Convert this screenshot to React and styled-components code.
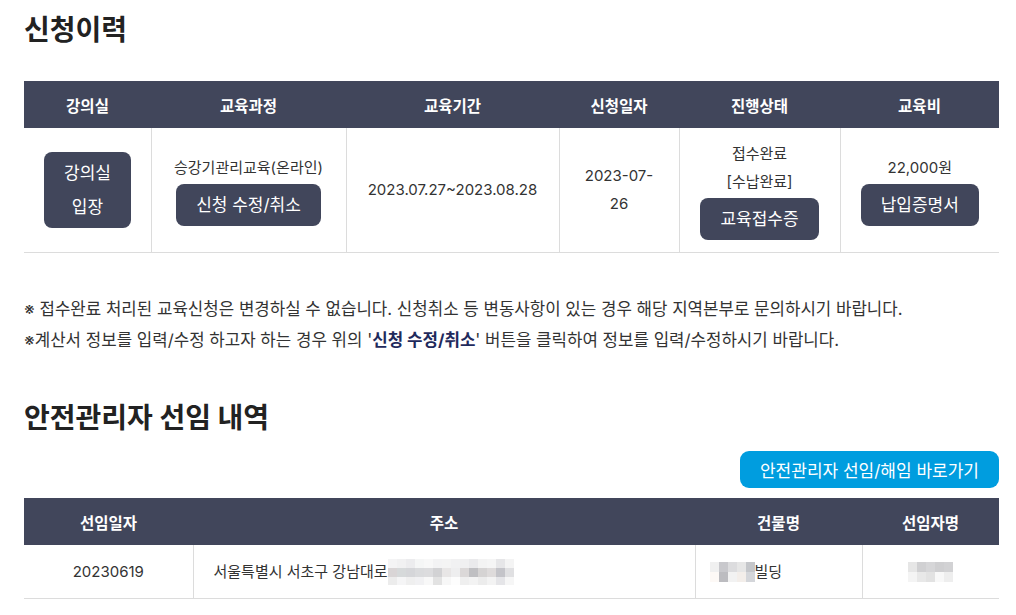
import styled, { createGlobalStyle } from 'styled-components';

const GlobalStyle = createGlobalStyle`
    body {
        margin: 0;
        background: #fff;
        font-family: "Inter", "Noto Sans CJK KR", sans-serif;
        color: #333;
    }
`;

const Page = styled.div`
    width: 975px;
    padding: 12px 24px 0;
`;

const Title = styled.h2`
    margin: 0;
    font-size: 28px;
    line-height: 36px;
    font-weight: 700;
    color: #222;
    letter-spacing: 0;
    margin-top: ${(p) => p.$top || 0}px;
`;

const Table = styled.table`
    width: 975px;
    table-layout: fixed;
    border-collapse: collapse;
    margin-top: ${(p) => p.$top || 0}px;
`;

const Th = styled.th`
    height: 47px;
    padding: 0;
    background: #41465b;
    color: #fff;
    font-size: 15.5px;
    font-weight: 700;
    text-align: center;
`;

const Td = styled.td`
    padding: ${(p) => (p.$short ? `0 20px 0 ${p.$left || 20}px` : '12px 20px')};
    height: ${(p) => (p.$short ? '53px' : 'auto')};
    border-bottom: 1px solid #dcdcdc;
    border-left: 1px solid #dcdcdc;
    font-size: 15px;
    line-height: 28px;
    color: #333;
    text-align: ${(p) => p.$align || 'center'};
    vertical-align: middle;
    word-break: keep-all;
    white-space: ${(p) => (p.$nowrap ? 'nowrap' : 'normal')};

    &:first-child {
        border-left: none;
    }
`;

const DarkButton = styled.button`
    display: inline-block;
    margin-top: ${(p) => p.$gap || 0}px;
    padding: 4px 20px;
    border: none;
    border-radius: 8px;
    background: #41465b;
    color: #fff;
    font-family: inherit;
    font-size: 17px;
    line-height: 34px;
    word-break: keep-all;
    cursor: pointer;
`;

const Notes = styled.div`
    margin-top: 41px;
    font-size: 16.8px;
    line-height: 31px;
    color: #333;
`;

const Strong = styled.b`
    color: #1f2a5c;
    font-weight: 700;
`;

const ActionRow = styled.div`
    display: flex;
    justify-content: flex-end;
    margin-top: 15px;
`;

const BlueButton = styled.button`
    height: 37px;
    padding: 0 20px;
    border: none;
    border-radius: 9px;
    background: #009ddf;
    color: #fff;
    font-family: inherit;
    font-size: 17px;
    cursor: pointer;
`;

const MosaicGrid = styled.span`
    display: inline-grid;
    grid-template-columns: repeat(${(p) => p.$cols}, ${(p) => p.$w}px);
    grid-auto-rows: ${(p) => p.$h}px;
    vertical-align: middle;
`;

const Pixel = styled.span`
    background: ${(p) => p.$c};
`;

function Mosaic({ rows, w = 9, h = 9 }) {
    return (
        <MosaicGrid $cols={rows[0].length} $w={w} $h={h}>
            {rows.flat().map((c, i) => (
                <Pixel key={i} $c={c} />
            ))}
        </MosaicGrid>
    );
}

const addressBlur = [
    ['#f4f4f5', '#f1f1f2', '#ececee', '#f5f6f6', '#f8f8f8', '#f3f3f4', '#f4f4f4', '#f1f1f2', '#f0f0f1', '#eaeaec', '#f3f3f3', '#f5f5f5', '#e6e6e8', '#f4f4f4'],
    ['#d9d5d6', '#d6d9da', '#d5d6d9', '#dadbdd', '#dcdcde', '#d2d2d4', '#e8e6e6', '#eeeeef', '#dbd8d8', '#bfbfc2', '#d5d3d3', '#dedbdb', '#c4c4c9', '#e0e0e2'],
    ['#ececec', '#f5f5f6', '#efefef', '#f1f1f3', '#f8f8f8', '#e2e2e2', '#f7f7f7', '#fdfdfd', '#efefef', '#f3f3f3', '#ececec', '#f3f3f3', '#e5e5e8', '#f6f6f6'],
];

const buildingBlur = [
    ['#f0f0f0', '#c8c8cc', '#dcdcde', '#e6e6e6', '#c4c6ca'],
    ['#fdf9f6', '#bcbcc0', '#f2f2f2', '#f3eeea', '#d4d6da'],
];

const nameBlur = [
    ['#e6e6e6', '#d0d0d2', '#d6d6d8', '#cfcfd1', '#d2d2d4'],
    ['#f4f4f4', '#e8e8e8', '#e2e2e2', '#f8f8f8', '#eeeeee'],
];

export default function App() {
    return (
        <>
            <GlobalStyle />
            <Page>
                <Title>신청이력</Title>

                <Table $top={33}>
                    <colgroup>
                        <col style={{ width: 127 }} />
                        <col style={{ width: 195 }} />
                        <col style={{ width: 213 }} />
                        <col style={{ width: 120 }} />
                        <col style={{ width: 161 }} />
                        <col style={{ width: 159 }} />
                    </colgroup>
                    <thead>
                        <tr>
                            <Th>강의실</Th>
                            <Th>교육과정</Th>
                            <Th>교육기간</Th>
                            <Th>신청일자</Th>
                            <Th>진행상태</Th>
                            <Th>교육비</Th>
                        </tr>
                    </thead>
                    <tbody>
                        <tr>
                            <Td>
                                <DarkButton>강의실 입장</DarkButton>
                            </Td>
                            <Td>
                                승강기관리교육(온라인)
                                <br />
                                <DarkButton $gap={2}>신청 수정/취소</DarkButton>
                            </Td>
                            <Td $nowrap>2023.07.27~2023.08.28</Td>
                            <Td>
                                2023-07-
                                <br />
                                26
                            </Td>
                            <Td>
                                접수완료
                                <br />
                                [수납완료]
                                <br />
                                <DarkButton $gap={2}>교육접수증</DarkButton>
                            </Td>
                            <Td>
                                22,000원
                                <br />
                                <DarkButton $gap={2}>납입증명서</DarkButton>
                            </Td>
                        </tr>
                    </tbody>
                </Table>

                <Notes>
                    <div>※ 접수완료 처리된 교육신청은 변경하실 수 없습니다. 신청취소 등 변동사항이 있는 경우 해당 지역본부로 문의하시기 바랍니다.</div>
                    <div>
                        ※계산서 정보를 입력/수정 하고자 하는 경우 위의 '<Strong>신청 수정/취소</Strong>' 버튼을 클릭하여 정보를 입력/수정하시기 바랍니다.
                    </div>
                </Notes>

                <Title $top={44}>안전관리자 선임 내역</Title>

                <ActionRow>
                    <BlueButton>안전관리자 선임/해임 바로가기</BlueButton>
                </ActionRow>

                <Table $top={10}>
                    <colgroup>
                        <col style={{ width: 169 }} />
                        <col style={{ width: 502 }} />
                        <col style={{ width: 167 }} />
                        <col style={{ width: 137 }} />
                    </colgroup>
                    <thead>
                        <tr>
                            <Th>선임일자</Th>
                            <Th>주소</Th>
                            <Th>건물명</Th>
                            <Th>선임자명</Th>
                        </tr>
                    </thead>
                    <tbody>
                        <tr>
                            <Td $short>20230619</Td>
                            <Td $short $align="left">
                                서울특별시 서초구 강남대로
                                <Mosaic rows={addressBlur} h={8.7} />
                            </Td>
                            <Td $short $align="left" $left={14}>
                                <Mosaic rows={buildingBlur} h={10} />
                                빌딩
                            </Td>
                            <Td $short>
                                <Mosaic rows={nameBlur} h={10} />
                            </Td>
                        </tr>
                    </tbody>
                </Table>
            </Page>
        </>
    );
}
